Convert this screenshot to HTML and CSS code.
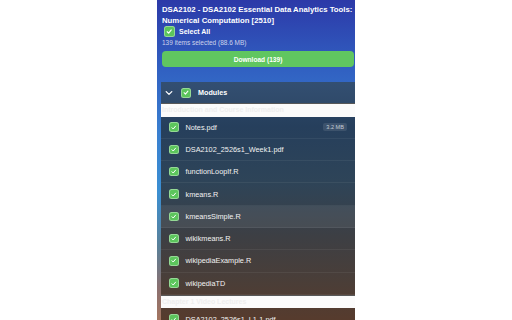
FILE: index.html
```html
<!DOCTYPE html>
<html lang="en">
<head>
    <meta charset="UTF-8">
    <meta name="viewport" content="width=device-width, initial-scale=1.0">
    <title>Canvas Downloader</title>
    <link rel="stylesheet" href="styles.css">
</head>
<body>
    <div class="popup">
        <!-- Course header -->
        <div class="top">
            <h1 class="course">DSA2102 - DSA2102 Essential Data Analytics Tools: Numerical Computation [2510]</h1>
            <div class="select-all">
                <span class="check"><svg viewBox="0 0 10 10"><polyline points="2.6,5.3 4.3,7 7.4,3.2"/></svg></span>
                <span>Select All</span>
            </div>
            <div class="summary">139 items selected (88.6 MB)</div>
            <button class="download">Download (139)</button>
        </div>

        <!-- Modules list -->
        <div class="modules">
            <div class="modules-head">
                <svg class="chevron" viewBox="0 0 8 6"><polyline points="1.2,1.6 4,4.4 6.8,1.6"/></svg>
                <span class="check"><svg viewBox="0 0 10 10"><polyline points="2.6,5.3 4.3,7 7.4,3.2"/></svg></span>
                <span>Modules</span>
            </div>

            <div class="section-title">Introduction and Course Information</div>
            <ul class="files">
                <li><span class="check"><svg viewBox="0 0 10 10"><polyline points="2.6,5.3 4.3,7 7.4,3.2"/></svg></span><span class="name">Notes.pdf</span><span class="size">3.2 MB</span></li>
                <li><span class="check"><svg viewBox="0 0 10 10"><polyline points="2.6,5.3 4.3,7 7.4,3.2"/></svg></span><span class="name">DSA2102_2526s1_Week1.pdf</span></li>
                <li><span class="check"><svg viewBox="0 0 10 10"><polyline points="2.6,5.3 4.3,7 7.4,3.2"/></svg></span><span class="name">functionLoopIf.R</span></li>
                <li><span class="check"><svg viewBox="0 0 10 10"><polyline points="2.6,5.3 4.3,7 7.4,3.2"/></svg></span><span class="name">kmeans.R</span></li>
                <li class="hover"><span class="check"><svg viewBox="0 0 10 10"><polyline points="2.6,5.3 4.3,7 7.4,3.2"/></svg></span><span class="name">kmeansSimple.R</span></li>
                <li><span class="check"><svg viewBox="0 0 10 10"><polyline points="2.6,5.3 4.3,7 7.4,3.2"/></svg></span><span class="name">wikikmeans.R</span></li>
                <li><span class="check"><svg viewBox="0 0 10 10"><polyline points="2.6,5.3 4.3,7 7.4,3.2"/></svg></span><span class="name">wikipediaExample.R</span></li>
                <li><span class="check"><svg viewBox="0 0 10 10"><polyline points="2.6,5.3 4.3,7 7.4,3.2"/></svg></span><span class="name">wikipediaTD</span></li>
            </ul>

            <div class="section-title">Chapter 1 Video Lectures</div>
            <ul class="files">
                <li><span class="check"><svg viewBox="0 0 10 10"><polyline points="2.6,5.3 4.3,7 7.4,3.2"/></svg></span><span class="name">DSA2102_2526s1_L1-1.pdf</span></li>
            </ul>
        </div>
    </div>
</body>
</html>
```

FILE: styles.css
```css
body {
    margin: 0;
    padding: 0;
    background-color: #ffffff;
    font-family: "Liberation Sans", Arial, sans-serif;
    color: #ffffff;
}
/* Popup panel */
.popup {
    width: 198px;
    height: 320px;
    margin: 0 auto;
    padding-left: 4px;
    box-sizing: border-box;
    overflow: hidden;
    background: linear-gradient(180deg, #2c39a8 0%, #3161c2 22%, #3a80d0 42%, #3b8fd2 60%, #5a8098 77%, #8a7070 90%, #a47560 100%);
}
.top {
    padding: 3.5px 1px 0 1px;
}
.course {
    margin: 0;
    font-size: 7.75px;
    line-height: 11.5px;
    font-weight: bold;
    color: #ffffff;
}
.check {
    display: inline-flex;
    align-items: center;
    justify-content: center;
    width: 10px;
    height: 10px;
    box-sizing: border-box;
    flex-shrink: 0;
    background-color: #5cc55c;
    border: 1px solid rgba(255, 255, 255, 0.35);
    border-radius: 2.5px;
}
.check svg {
    width: 9px;
    height: 9px;
    fill: none;
    stroke: #ffffff;
    stroke-width: 1.3;
    stroke-linecap: round;
    stroke-linejoin: round;
}
.select-all {
    display: flex;
    align-items: center;
    gap: 4.5px;
    height: 10px;
    padding-left: 2px;
    font-size: 7px;
    font-weight: bold;
}
.select-all .check {
    width: 10.5px;
    height: 10.5px;
}
.summary {
    margin-top: 1.5px;
    font-size: 6.5px;
    line-height: 10px;
    color: rgba(255, 255, 255, 0.75);
}
.download {
    display: block;
    width: 100%;
    height: 16px;
    margin-top: 3px;
    padding: 0;
    font-family: inherit;
    font-size: 6.6px;
    font-weight: bold;
    color: #ffffff;
    background-color: #60c660;
    border: none;
    border-radius: 4px;
}
/* Modules */
.modules {
    margin-top: 15px;
    background: linear-gradient(180deg, #2d4a6e 0%, #263f5c 18%, #2e4458 40%, #3d3f44 62%, #4a3e38 80%, #5a3a2a 100%);
}
.modules-head {
    display: flex;
    align-items: center;
    height: 21px;
    padding-left: 4px;
    font-size: 7.2px;
    font-weight: bold;
    background-color: rgba(255, 255, 255, 0.03);
}
.chevron {
    width: 8px;
    height: 6px;
    margin-right: 8px;
    fill: none;
    stroke: #ffffff;
    stroke-width: 1.3;
    stroke-linecap: round;
    stroke-linejoin: round;
}
.modules-head .check {
    margin-right: 7px;
}
.section-title {
    height: 12.5px;
    padding-left: 1px;
    border-top: 1.5px solid rgba(0, 0, 0, 0.65);
    background-color: #fbfbfb;
    color: #eeeeee;
    font-size: 7px;
    font-weight: bold;
    line-height: 12px;
}
.files {
    list-style: none;
    margin: 0;
    padding: 0;
}
.files li {
    display: flex;
    align-items: center;
    height: 22.3px;
    box-sizing: border-box;
    padding: 0 8px 0 8px;
    border-bottom: 1px solid rgba(255, 255, 255, 0.06);
    font-size: 7.3px;
    color: #f2f2f2;
}
.files li.hover {
    background-color: rgba(255, 255, 255, 0.07);
}
.files .check {
    width: 9.5px;
    height: 9.5px;
    margin-right: 7px;
}
.name {
    flex: 1;
}
.size {
    padding: 1px 3px;
    font-size: 5.6px;
    color: rgba(255, 255, 255, 0.7);
    background-color: rgba(255, 255, 255, 0.1);
    border-radius: 2px;
}
```
